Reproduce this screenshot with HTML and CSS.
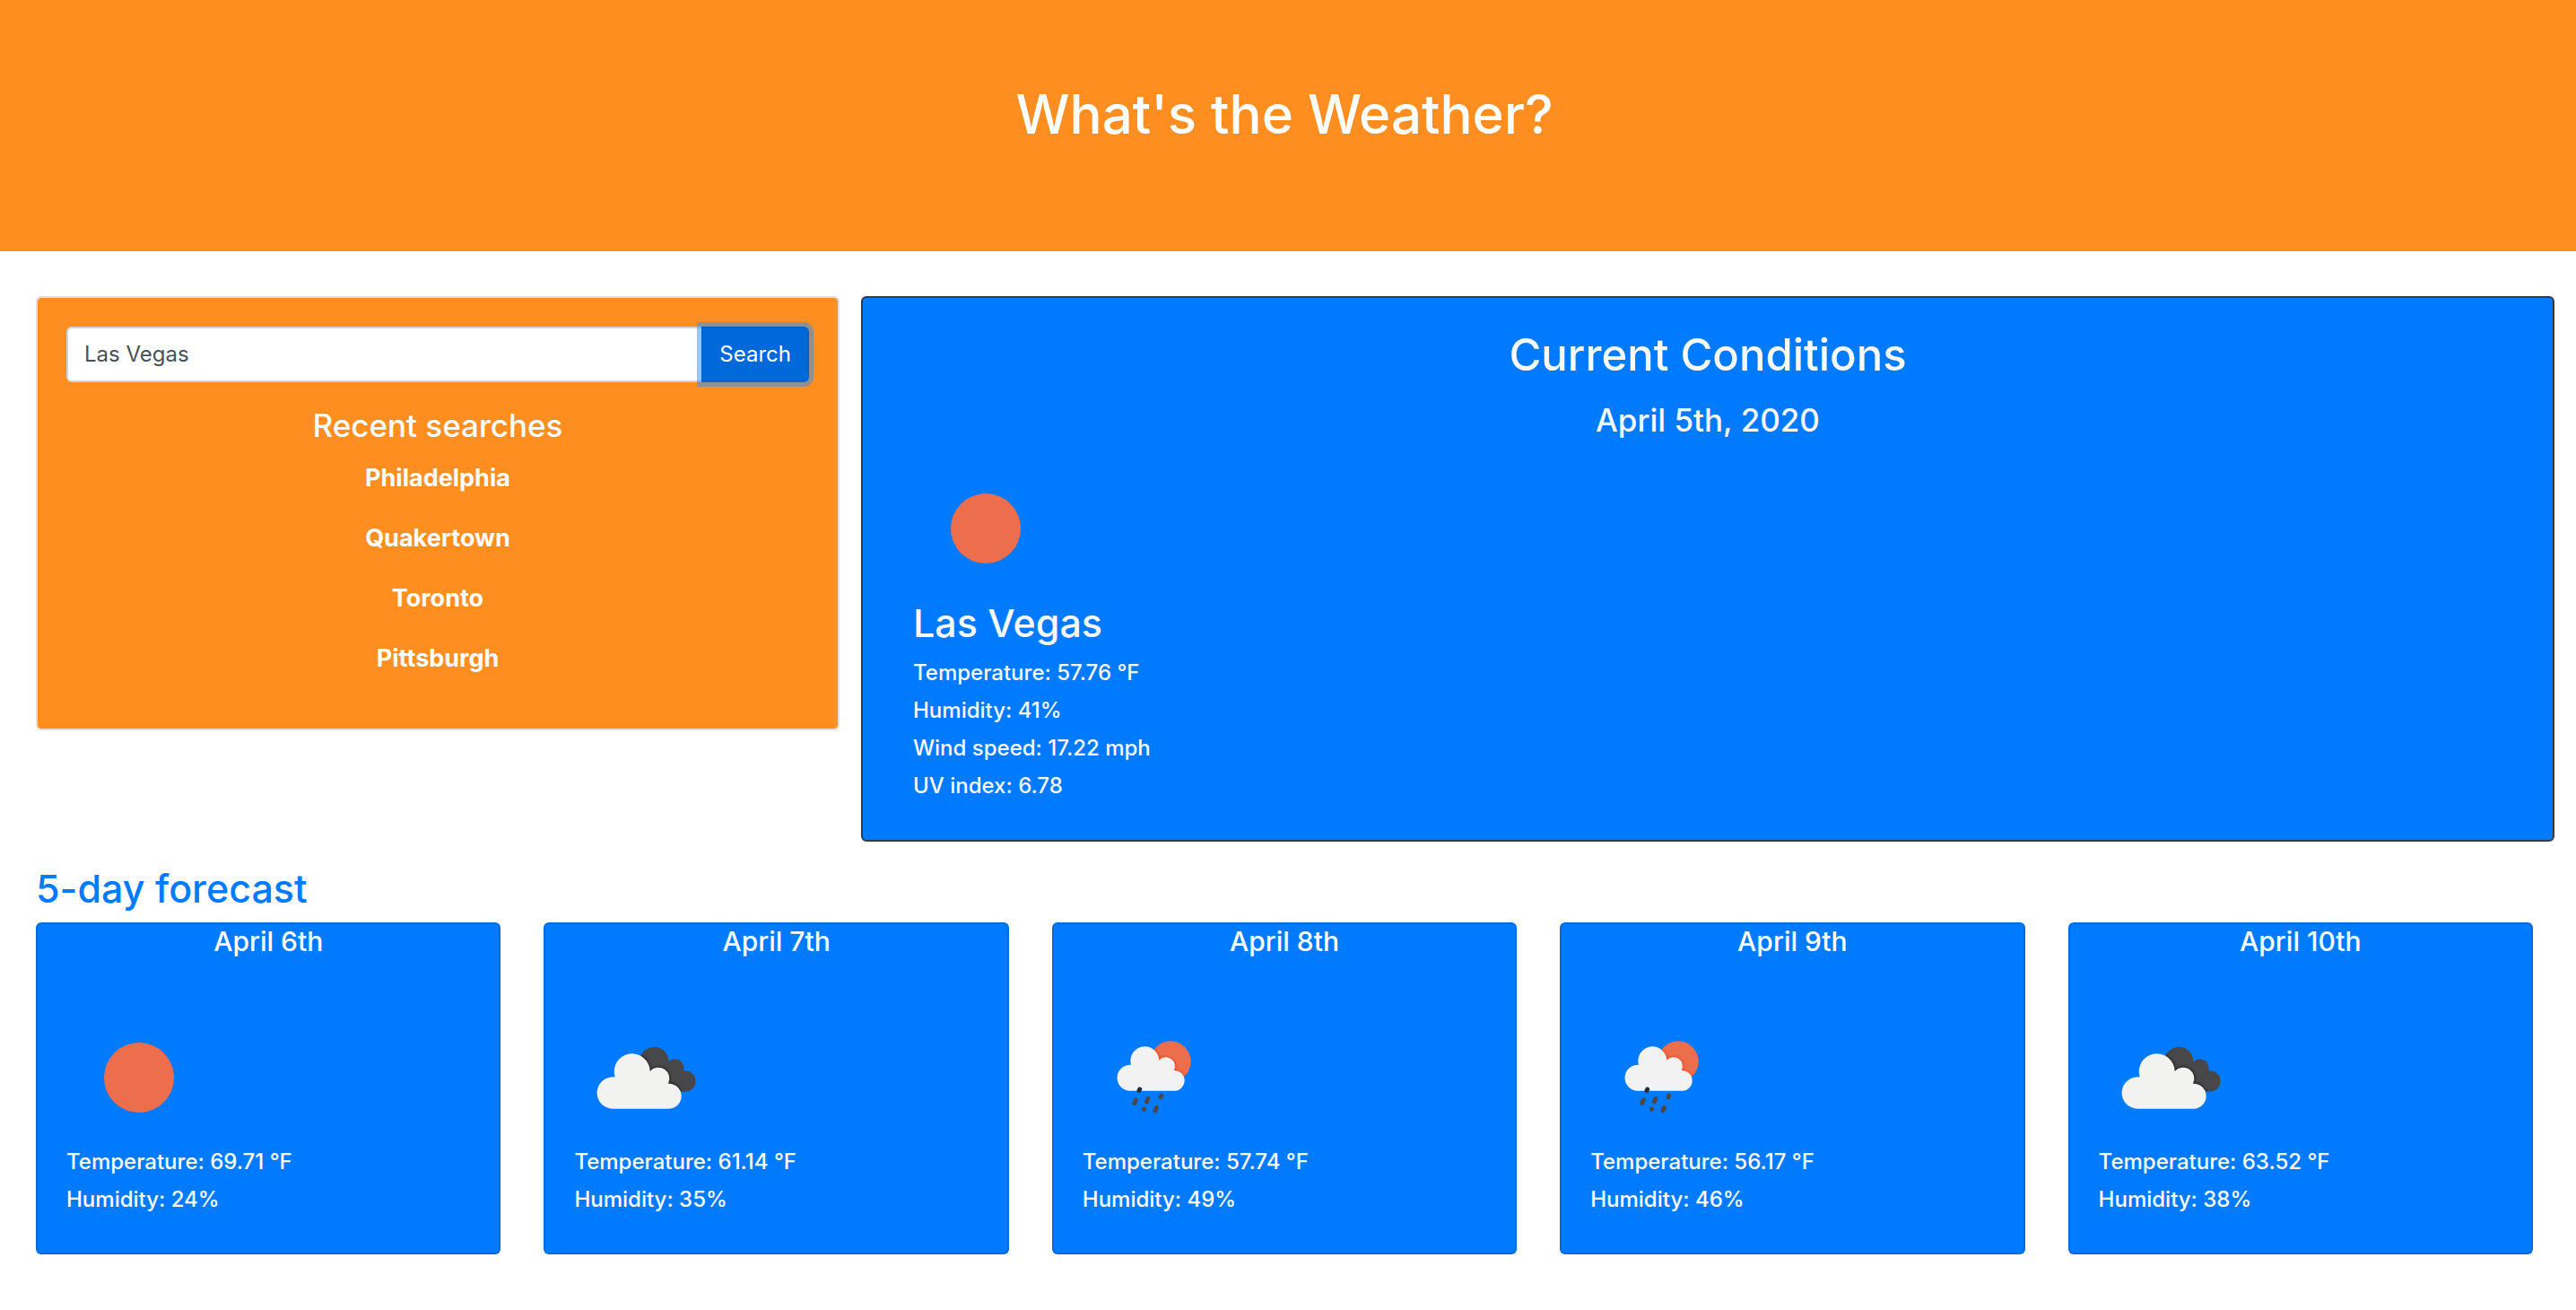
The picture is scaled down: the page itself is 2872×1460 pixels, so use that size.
FILE: index.html
```html
<!DOCTYPE html>
<html lang="en">
<head>
  <meta charset="utf-8">
  <meta name="viewport" content="width=device-width, initial-scale=1">
  <title>What's the Weather?</title>
  <link rel="stylesheet" href="styles.css">
</head>
<body>
  <!-- Shared weather symbols -->
  <svg class="sprite" width="0" height="0" aria-hidden="true">
    <defs>
      <filter id="soft" x="-10%" y="-10%" width="120%" height="120%">
        <feGaussianBlur stdDeviation="3"/>
      </filter>
      <clipPath id="back-cloud">
        <circle cx="389" cy="187" r="48"/>
        <circle cx="459" cy="210" r="30"/>
        <circle cx="493" cy="254" r="35"/>
        <path d="M350 187h90l50 60v42h-90l-60-60z"/>
      </clipPath>
      <clipPath id="back-sun">
        <circle cx="315" cy="188" r="68"/>
      </clipPath>
      <path id="front-cloud" d="M250 346A53 53 0 1 1 258 240.500A60 60 0 1 1 375 221A37 37 0 0 1 436 262A42 42 0 1 1 440 346Z"/>
      <path id="rain-cloud" d="M177 286A43 43 0 1 1 183 199.500A48 48 0 1 1 277 184A30 30 0 0 1 326 218A34 34 0 1 1 330 286Z"/>
      <symbol id="sun" viewBox="0 0 164 155">
        <circle cx="81" cy="82" r="39" fill="#ec6e4c"/>
      </symbol>
      <symbol id="clouds" viewBox="121 -4 492 465">
        <g clip-path="url(#back-cloud)">
          <rect x="330" y="130" width="210" height="170" fill="#48484a"/>
          <use href="#front-cloud" fill="none" stroke="#2a2a2a" stroke-width="8" filter="url(#soft)"/>
        </g>
        <use href="#front-cloud" fill="#f2f2f0"/>
      </symbol>
      <symbol id="rain" viewBox="21 -4 492 465">
        <g clip-path="url(#back-sun)">
          <rect x="240" y="110" width="150" height="150" fill="#ec6e4c"/>
          <use href="#rain-cloud" fill="none" stroke="#e8502c" stroke-width="8" filter="url(#soft)"/>
        </g>
        <use href="#rain-cloud" fill="#f2f2f2"/>
        <g stroke="#48484a" stroke-width="15" stroke-linecap="round">
          <path d="M212 281l-2 4" stroke="#2c2c2c"/>
          <path d="M199 317l-5 11M240 312l-5 11M284 303l-2 4M227 347l-1 1M268 343l-4 10"/>
        </g>
      </symbol>
    </defs>
  </svg>

  <header class="banner">
    <h1>What's the Weather?</h1>
  </header>

  <main class="page">
    <div class="overview">
      <section class="card search-card">
        <form class="search">
          <input class="search-input" type="text" value="Las Vegas" aria-label="City">
          <button class="search-button" type="button">Search</button>
        </form>
        <h2 class="recent-title">Recent searches</h2>
        <ul class="recent-list">
          <li>Philadelphia</li>
          <li>Quakertown</li>
          <li>Toronto</li>
          <li>Pittsburgh</li>
        </ul>
      </section>

      <section class="card current-card">
        <h2 class="current-title">Current Conditions</h2>
        <h3 class="current-date">April 5th, 2020</h3>
        <svg class="icon" role="img" aria-label="Clear sky"><use href="#sun"/></svg>
        <h3 class="city">Las Vegas</h3>
        <p class="reading">Temperature: 57.76 °F</p>
        <p class="reading">Humidity: 41%</p>
        <p class="reading">Wind speed: 17.22 mph</p>
        <p class="reading">UV index: 6.78</p>
      </section>
    </div>

    <h2 class="forecast-title">5-day forecast</h2>
    <div class="forecast">
      <article class="card day">
        <h3 class="day-date">April 6th</h3>
        <svg class="icon" role="img" aria-label="Clear sky"><use href="#sun"/></svg>
        <p class="reading">Temperature: 69.71 °F</p>
        <p class="reading">Humidity: 24%</p>
      </article>
      <article class="card day">
        <h3 class="day-date">April 7th</h3>
        <svg class="icon" role="img" aria-label="Cloudy"><use href="#clouds"/></svg>
        <p class="reading">Temperature: 61.14 °F</p>
        <p class="reading">Humidity: 35%</p>
      </article>
      <article class="card day">
        <h3 class="day-date">April 8th</h3>
        <svg class="icon" role="img" aria-label="Rain"><use href="#rain"/></svg>
        <p class="reading">Temperature: 57.74 °F</p>
        <p class="reading">Humidity: 49%</p>
      </article>
      <article class="card day">
        <h3 class="day-date">April 9th</h3>
        <svg class="icon" role="img" aria-label="Rain"><use href="#rain"/></svg>
        <p class="reading">Temperature: 56.17 °F</p>
        <p class="reading">Humidity: 46%</p>
      </article>
      <article class="card day">
        <h3 class="day-date">April 10th</h3>
        <svg class="icon" role="img" aria-label="Cloudy"><use href="#clouds"/></svg>
        <p class="reading">Temperature: 63.52 °F</p>
        <p class="reading">Humidity: 38%</p>
      </article>
    </div>
  </main>
</body>
</html>
```

FILE: styles.css
```css
*,
*::before,
*::after {
  box-sizing: border-box;
}

body {
  margin: 0;
  background: #fff;
  color: #fff;
  font-family: "Inter", "Liberation Sans", sans-serif;
  font-size: 24px;
  line-height: 42px;
}

h1,
h2,
h3,
p,
ul {
  margin: 0;
  padding: 0;
  font-weight: 500;
}

.sprite {
  position: absolute;
}

.banner {
  padding: 87px 8px 113px 0;
  background: #ff8e21;
  text-align: center;
}

.banner h1 {
  font-size: 60px;
  line-height: 80px;
}

.page {
  padding: 50px 24px 62px 40px;
}

.overview {
  display: grid;
  grid-template-columns: 28fr 59fr;
  gap: 24px;
  align-items: start;
}

.card {
  border: 2px solid rgba(0, 0, 0, 0.125);
  border-radius: 6px;
  background: #007bff;
}

/* Search panel */
.search-card {
  padding: 32px 32px 58px;
  border-color: #dfdfdf;
  background: #ff8e21;
  background-clip: padding-box;
  text-align: center;
}

.search {
  display: flex;
  height: 62px;
}

.search-input {
  flex: 1;
  min-width: 0;
  padding: 0 18px;
  border: 2px solid #ced4da;
  border-radius: 6px 0 0 6px;
  background: #fff;
  color: #495057;
  font: inherit;
}

.search-button {
  position: relative;
  margin-left: -2px;
  padding: 0 18px;
  border: 2px solid #0062cc;
  border-radius: 0 6px 6px 0;
  background: #0069d9;
  box-shadow: 0 0 0 5px rgba(38, 143, 255, 0.5);
  color: #fff;
  font: inherit;
}

.recent-title {
  margin-top: 25px;
  font-size: 35px;
  line-height: 46px;
}

.recent-list {
  display: grid;
  gap: 27px;
  margin-top: 16px;
  font-size: 27px;
  line-height: 40px;
  list-style: none;
}

.recent-list li {
  font-weight: 700;
}

/* Current conditions panel */
.current-card {
  padding: 32px 56px 39px;
  border-color: #343a40;
  color: #f8f9fa;
}

.current-title {
  font-size: 49px;
  line-height: 64px;
  text-align: center;
}

.current-date {
  margin-top: 17px;
  font-size: 35px;
  line-height: 46px;
  text-align: center;
}

.icon {
  display: block;
  width: 164px;
  height: 155px;
}

.current-card .icon {
  margin-top: 16px;
}

.city {
  margin: 9px 0 12px;
  font-size: 43px;
  line-height: 46px;
}

.reading {
  font-weight: 500;
}

/* Forecast */
.forecast-title {
  margin: 26px 0 12px;
  color: #007bff;
  font-size: 43px;
  line-height: 52px;
}

.forecast {
  display: grid;
  grid-template-columns: repeat(5, 1fr);
  gap: 48px;
  margin-right: 24px;
}

.day {
  padding: 0 32px 38px;
}

.day-date {
  font-size: 30px;
  line-height: 38px;
  text-align: center;
}

.day .icon {
  margin-top: 51px;
}
```
